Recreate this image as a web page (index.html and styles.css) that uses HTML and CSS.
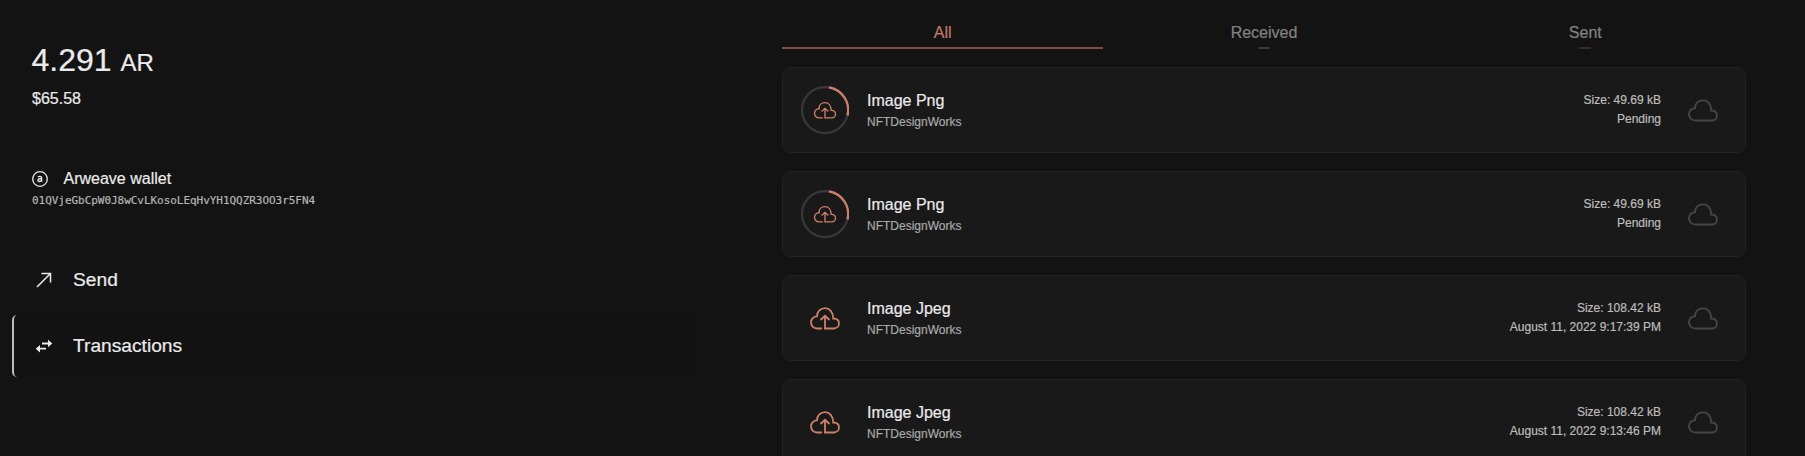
FILE: index.html
```html
<!DOCTYPE html>
<html lang="en">
<head>
<meta charset="utf-8">
<title>Arweave wallet</title>
<link rel="stylesheet" href="styles.css">
</head>
<body>
<svg class="defs" aria-hidden="true">
  <symbol id="cloud" viewBox="0 0 32 24"><path d="M8 22.5a6 6 0 0 1-6-6.2C2 13 4.700 10.300 8 10.300C8 5.500 11.500 2.200 16 2.200s8.200 3.500 8.200 10.300C27.800 12.300 30 14.500 30 17.300s-2.200 5.200-5.200 5.200z"/></symbol>
  <symbol id="upload" viewBox="0 0 32 24"><path d="M13 22.500H8a6 6 0 0 1-6-6.200C2 13 4.700 10.300 8 10.300C8 5.500 11.500 2.200 16 2.200s8.200 3.500 8.200 10.300C27.800 12.300 30 14.500 30 17.300s-2.200 5.200-5.200 5.200H16V10.500M11.500 14L16 9.800l4.500 4.200"/></symbol>
</svg>
<div class="app">
  <aside class="sidebar">
    <div class="balance">4.291 <span class="unit">AR</span></div>
    <div class="fiat">$65.58</div>
    <div class="wallet">
      <svg class="logo" viewBox="0 0 16 16"><circle cx="8" cy="8" r="7.300"/><path d="M6 6.200C6.600 5.100 9.600 4.900 9.600 6.700V9.600q0 .8.700.9M9.600 7.500C5 7.500 5.400 10.500 7.300 10.500q1.600 0 2.300-1.400"/></svg>
      <span>Arweave wallet</span>
    </div>
    <div class="address">01QVjeGbCpW0J8wCvLKosoLEqHvYH1QQZR3OO3r5FN4</div>
    <nav class="menu">
      <a class="item"><svg class="menu-icon" viewBox="0 0 20 20"><path class="line" d="M3 17L16.700 3.300M7.500 3.500h9v9"/></svg>Send</a>
      <a class="item active"><svg class="menu-icon" viewBox="0 0 20 20"><path class="line thick" d="M8 7.500h7M12 12.700H5"/><path class="fill" d="M14 3.700l4.300 3.800L14 11.300zM6 8.900L1.700 12.700L6 16.500z"/></svg>Transactions</a>
    </nav>
  </aside>
  <main class="content">
    <div class="tabs"><div class="tab selected">All</div><div class="tab received">Received</div><div class="tab">Sent</div></div>
    <div class="list">
      <article class="card">
        <div class="badge"><svg class="ring" viewBox="0 0 48 48"><circle cx="24" cy="24" r="23"/><path d="M28 1.350A23 23 0 0 1 46.500 29.500"/></svg><svg class="up small"><use href="#upload"/></svg></div>
        <div class="info"><div class="name">Image Png</div><div class="by">NFTDesignWorks</div></div>
        <div class="meta"><div>Size: 49.69 kB</div><div>Pending</div></div>
        <svg class="status"><use href="#cloud"/></svg>
      </article>
      <article class="card">
        <div class="badge"><svg class="ring" viewBox="0 0 48 48"><circle cx="24" cy="24" r="23"/><path d="M28 1.350A23 23 0 0 1 46.500 29.500"/></svg><svg class="up small"><use href="#upload"/></svg></div>
        <div class="info"><div class="name">Image Png</div><div class="by">NFTDesignWorks</div></div>
        <div class="meta"><div>Size: 49.69 kB</div><div>Pending</div></div>
        <svg class="status"><use href="#cloud"/></svg>
      </article>
      <article class="card">
        <div class="badge"><svg class="up"><use href="#upload"/></svg></div>
        <div class="info"><div class="name">Image Jpeg</div><div class="by">NFTDesignWorks</div></div>
        <div class="meta"><div>Size: 108.42 kB</div><div>August 11, 2022 9:17:39 PM</div></div>
        <svg class="status"><use href="#cloud"/></svg>
      </article>
      <article class="card">
        <div class="badge"><svg class="up"><use href="#upload"/></svg></div>
        <div class="info"><div class="name">Image Jpeg</div><div class="by">NFTDesignWorks</div></div>
        <div class="meta"><div>Size: 108.42 kB</div><div>August 11, 2022 9:13:46 PM</div></div>
        <svg class="status"><use href="#cloud"/></svg>
      </article>
    </div>
  </main>
</div>
</body>
</html>
```
FILE: styles.css
```css
* { box-sizing: border-box; }
body { margin: 0; background: #131313; color: #ebebeb; font-family: "Liberation Sans", Arial, sans-serif; font-size: 16px; overflow: hidden; -webkit-text-stroke: 0.2px; }
.defs { display: none; }
.app { display: flex; height: 456px; overflow: hidden; }
.sidebar { width: 782px; padding: 41px 88px 0 12px; flex: none; }
.balance { padding-left: 19.500px; font-size: 32px; line-height: 38px; }
.unit { font-size: 24px; }
.fiat { padding-left: 20px; margin-top: 7px; line-height: 20px; }
.wallet { display: flex; align-items: center; gap: 15.500px; padding-left: 20px; margin-top: 60px; line-height: 20px; }
.logo { width: 16px; height: 16px; fill: none; stroke: #ebebeb; stroke-width: 1.300; }
.address { padding-left: 20px; margin-top: 4px; font: 11px/16px "DejaVu Sans Mono", monospace; color: #b5b5b5; letter-spacing: -0.040px; }
.menu { margin-top: 40px; display: flex; flex-direction: column; gap: 4px; }
.item { display: flex; align-items: center; gap: 19.500px; height: 62px; padding-left: 19px; border-left: 2px solid transparent; border-radius: 5px; font-size: 19.200px; }
.item.active { border-left-color: #bdbdbd; background: #121212; }
.menu-icon { width: 20px; height: 20px; margin-left: 0.500px; }
.line { fill: none; stroke: #ebebeb; stroke-width: 1.500; }
.thick { stroke-width: 1.800; }
.fill { fill: #ebebeb; }
.content { width: 964px; padding-top: 21px; }
.tabs { display: flex; height: 28px; }
.tab { flex: 1; display: flex; flex-direction: column; align-items: center; justify-content: space-between; line-height: 24px; color: #828282; }
.tab::after { content: ""; width: 12px; height: 2px; background: #3d292a; }
.tab.received::after { background: #343b2c; }
.tab.selected { color: #c0796a; }
.tab.selected::after { width: 100%; background: #7a4e44; }
.list { display: flex; flex-direction: column; gap: 18px; margin-top: 18px; }
.card { flex: none; display: flex; align-items: center; height: 86px; padding: 0 26px 0 18px; border: 1px solid #222; border-radius: 8px; background: #191919; }
.badge { width: 48px; height: 48px; display: grid; place-items: center; }
.badge > svg { grid-area: 1 / 1; fill: none; stroke: #cd8069; }
.ring { width: 48px; height: 48px; stroke-width: 2.300; }
.badge .ring circle { stroke: #383838; }
.up { width: 32px; height: 24px; stroke-width: 1.800; }
.up.small { width: 24px; height: 18px; }
.info { flex: 1; margin-left: 18px; padding-top: 1px; }
.name { line-height: 22px; }
.by { font-size: 12px; line-height: 20px; color: #a8a8a8; }
.meta { font-size: 12px; line-height: 19px; text-align: right; color: #bdbdbd; }
.status { width: 32px; height: 24px; margin-left: 26px; fill: none; stroke: #444; stroke-width: 2; }
```
